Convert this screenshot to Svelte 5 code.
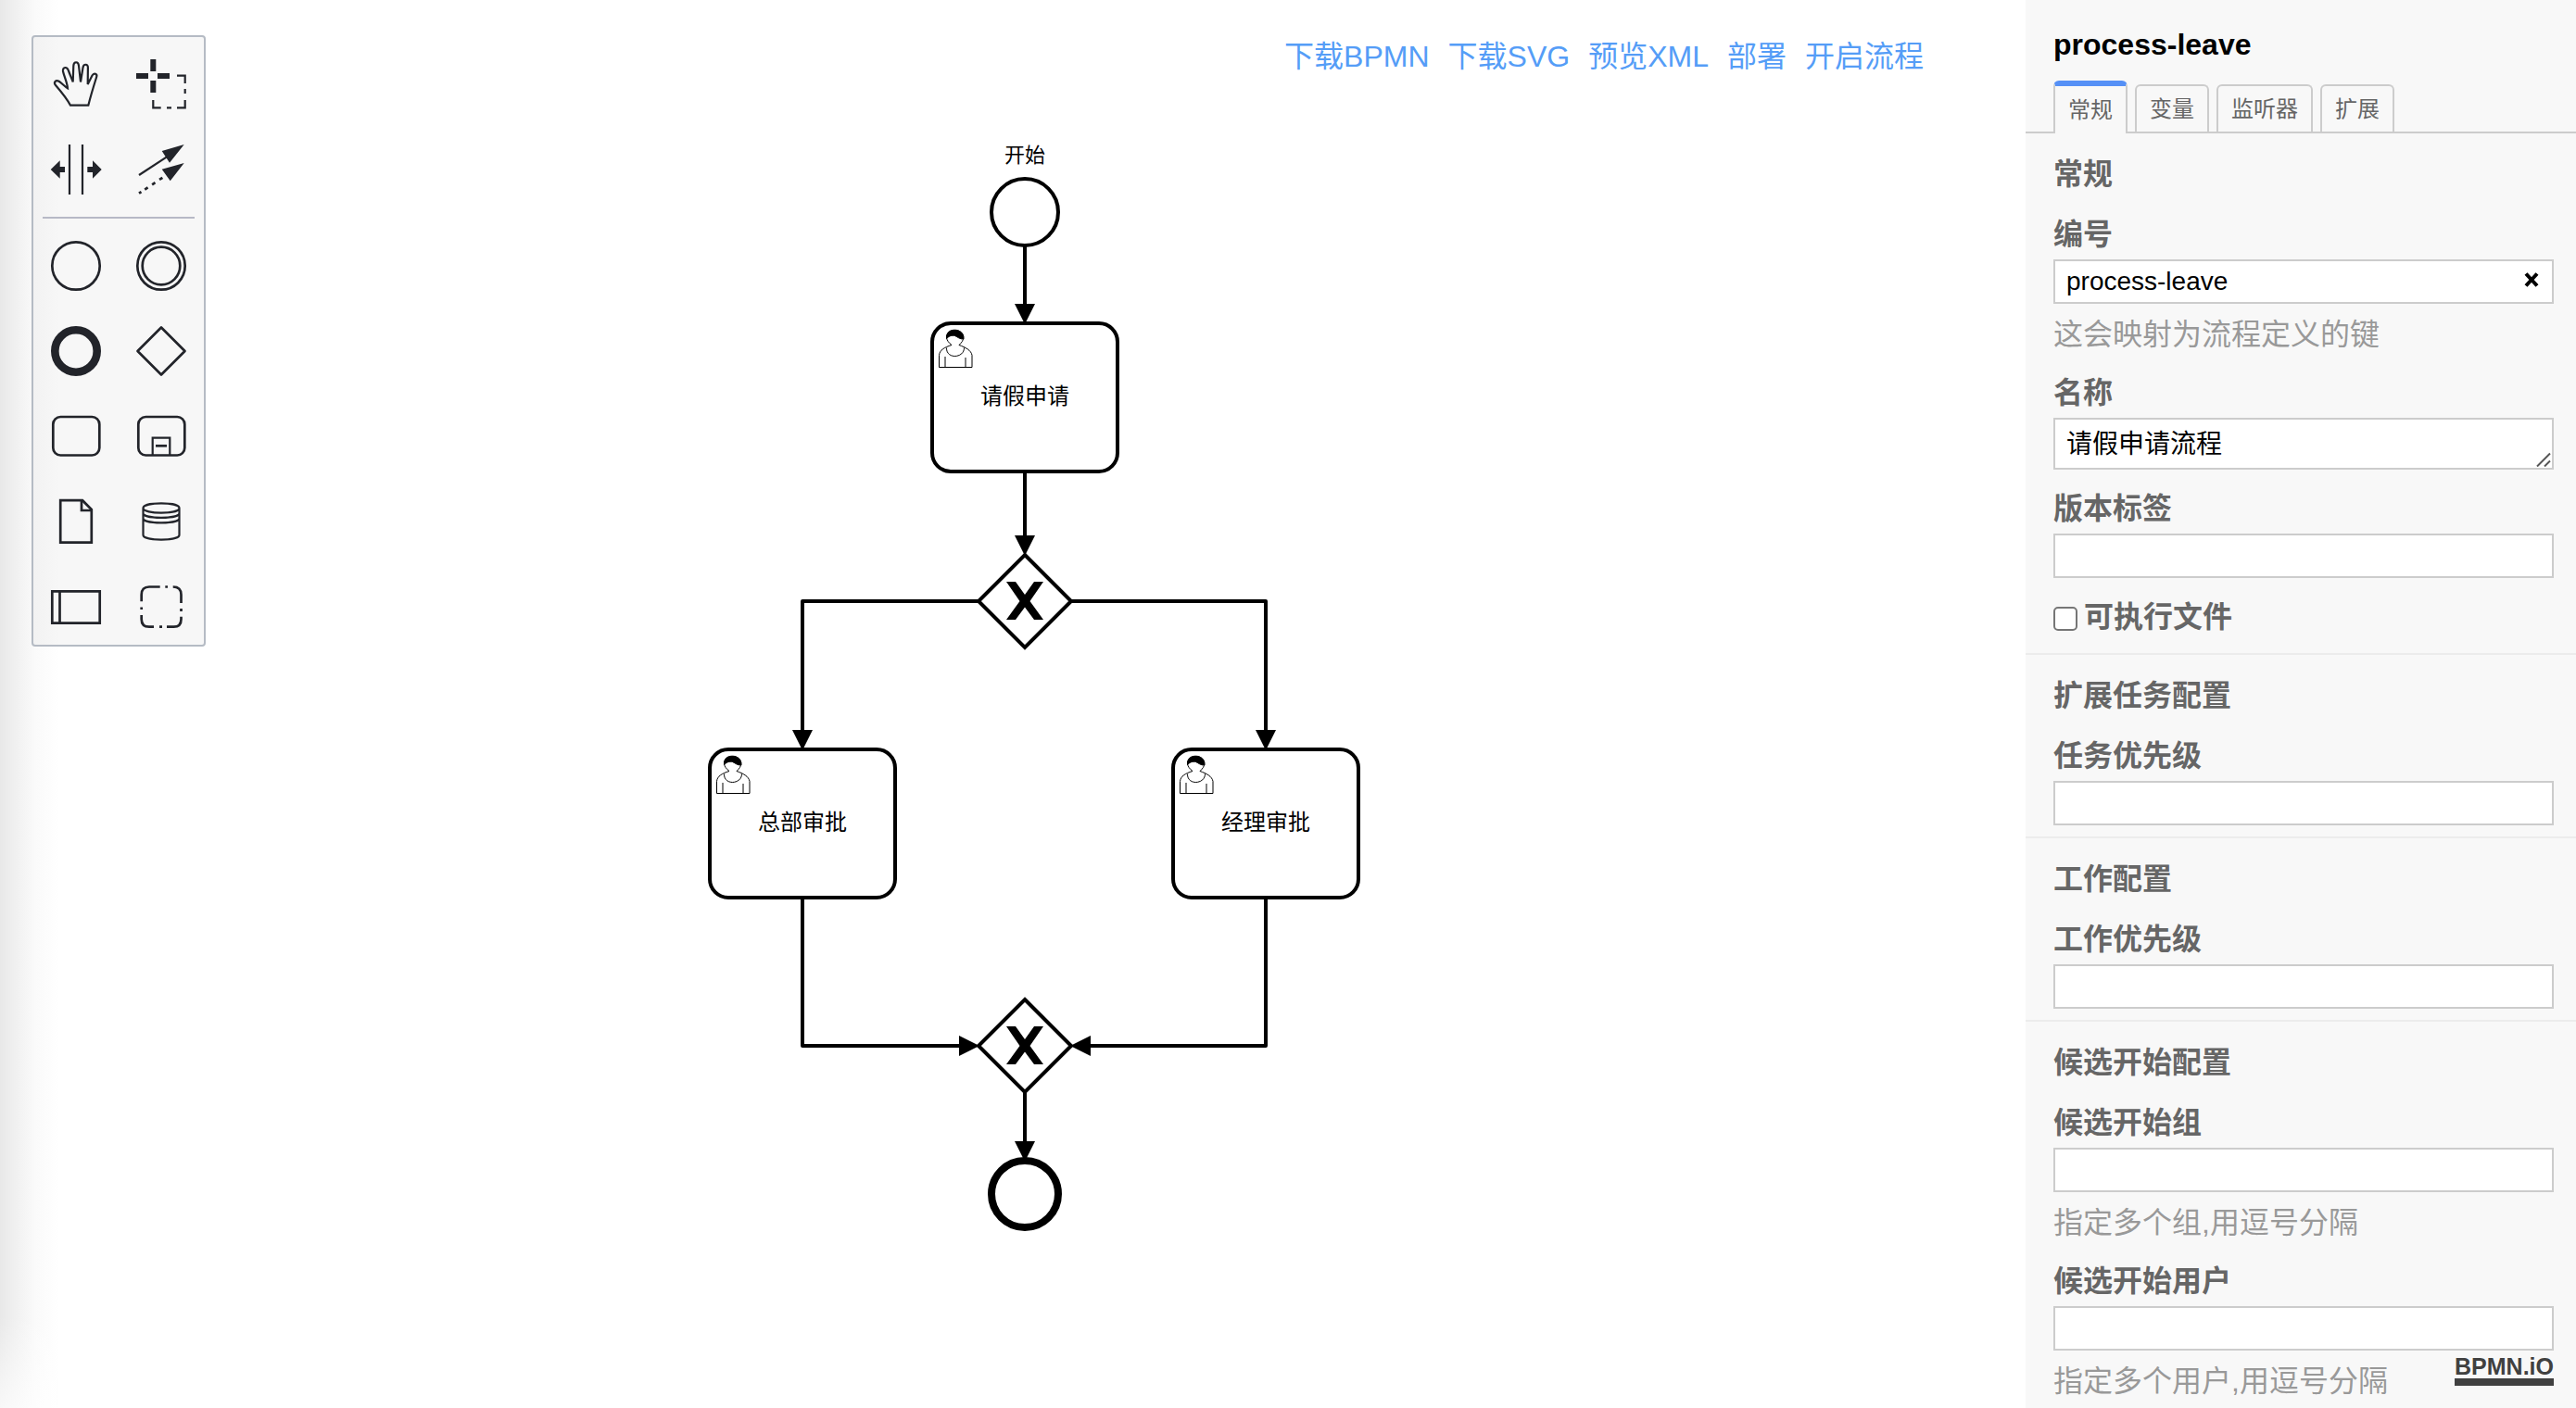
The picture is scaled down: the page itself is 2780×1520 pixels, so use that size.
<script>
  const links = ['下载BPMN', '下载SVG', '预览XML', '部署', '开启流程'];
  const tabs = ['常规', '变量', '监听器', '扩展'];
  let activeTab = $state(0);
  let processId = $state('process-leave');
  let processName = $state('请假申请流程');
  let executable = $state(false);

  const groups = [
    { title: '扩展任务配置', fields: [{ id: 'task-priority', label: '任务优先级' }] },
    { title: '工作配置', fields: [{ id: 'job-priority', label: '工作优先级' }] },
    {
      title: '候选开始配置',
      fields: [
        { id: 'starter-groups', label: '候选开始组', hint: '指定多个组,用逗号分隔' },
        { id: 'starter-users', label: '候选开始用户', hint: '指定多个用户,用逗号分隔' },
      ],
    },
  ];

  const tasks = [
    { x: 1006, y: 349, name: '请假申请' },
    { x: 766, y: 809, name: '总部审批' },
    { x: 1266, y: 809, name: '经理审批' },
  ];
  const gateways = [649, 1129];
  const flows = [
    'M1106 265V340',
    'M1106 509V590',
    'M1056 649H866V800',
    'M1156 649H1366V800',
    'M866 969V1129H1047',
    'M1366 969V1129H1165',
    'M1106 1179V1244',
  ];
  const heads = [
    'M1095 328h22l-11 22z',
    'M1095 578h22l-11 22z',
    'M855 788h22l-11 22z',
    'M1355 788h22l-11 22z',
    'M1035 1118v22l22-11z',
    'M1177 1118v22l-22-11z',
    'M1095 1232h22l-11 22z',
  ];
</script>

<div class="page">
  <main class="canvas">
    <svg class="diagram" aria-label="请假申请流程">
      {#each flows as d}<path class="flow" {d} />{/each}
      {#each heads as d}<path {d} />{/each}
      <circle class="shape" cx="1106" cy="229" r="36" />
      <text class="caption" x="1106" y="175">开始</text>
      {#each tasks as t}
        <g transform="translate({t.x} {t.y})">
          <rect class="shape" width="200" height="160" rx="20" />
          <g class="user">
            <path d="M7.5 47.5V34.5C8 29 13 26 21 23.5C18 21 15.5 18.5 15.5 14.5C16 10 20 7.5 24.5 7.5S33.5 10 33.8 14.5C34 18.5 31.5 21 29 23.5C36 26 42 29 43 34.5V47.5Z" />
            <path d="M15.5 26.5C15 39 34.5 38 34.5 26.5M14 36V47M36 37V47" />
            <path class="hair" d="M15.5 16.5C15 9 20 7.2 24.5 7.2S34 10 34 17C30 17.5 27 14.5 24.5 13.5C21 12.5 18 14 15.5 16.5Z" />
          </g>
          <text class="name" x="100" y="87">{t.name}</text>
        </g>
      {/each}
      {#each gateways as y}
        <g transform="translate(1106 {y})">
          <path class="shape" d="M0-50L50 0L0 50L-50 0Z" />
          <path d="M-20-21h10L0-7L10-21h10L5.5 0L20 20h-10L0 6.5L-10 20h-10L-5.5 0Z" />
        </g>
      {/each}
      <circle class="shape end" cx="1106" cy="1289" r="36" />
    </svg>

    <nav class="links">
      {#each links as l}<a href="#top">{l}</a>{/each}
    </nav>

    <div class="palette">
      <div class="tools">
        <button aria-label="抓手"><svg viewBox="0 0 60 60">
          <path class="s2" d="M24 52.7C20 45 14 38 8 31C5.5 28 8 24.5 12 27C15 29 18 32.5 21 34.3C20.5 28 17 21 16 16C15.3 11 20.5 10.5 22 15.5C24 21 25.5 24 26.7 27.5L27.3 10C27.6 5 32.6 5 33 10L35 27.5L37.5 12C38.2 7.5 43.2 7.8 42.9 12L42.7 30L47.5 20.5C49.5 17 53.3 18.7 52.2 22C50 29 46 42 43.3 52.7Z" /></svg></button>
        <button aria-label="框选"><svg viewBox="0 0 60 60">
          <path class="f" d="M18.3 3h6v13h-6zM18.3 26h6v13h-6zM3 18h13v6h-13zM26 18h13v6h-13z" />
          <path class="s2" d="M47 20.7H55.7V29M55.7 35v5M55.7 47V55.3H47M41 55.3h-5M29.7 55.3H21.3V47" /></svg></button>
        <button aria-label="空间"><svg viewBox="0 0 60 60">
          <path class="s2" d="M23 3V57M37 3V57" />
          <path class="f" d="M2.7 30L12.7 20.3V27H18V33H12.7V39.7ZM57.7 30L48 20.3V27H42.3V33H48V39.7Z" /></svg></button>
        <button aria-label="连线"><svg viewBox="0 0 60 60">
          <path class="s2" d="M6 36L36 16.3" />
          <path class="s3" stroke-dasharray="3 0 0 4.5 4 5.5 4 5.5 4 20" d="M6 55.7L34 37" />
          <path class="f" d="M54.7 3L30.7 10L39 22.7ZM54.7 23L30.7 29.7L39.7 42.3Z" /></svg></button>
      </div>
      <hr />
      <div class="tools">
        <button aria-label="开始事件"><svg viewBox="0 0 60 60"><circle class="s3" cx="30" cy="30" r="25.7" /></svg></button>
        <button aria-label="中间事件"><svg viewBox="0 0 60 60"><circle class="s3" cx="30" cy="30" r="25.7" /><circle class="s3" cx="30" cy="30" r="20.3" /></svg></button>
        <button aria-label="结束事件"><svg viewBox="0 0 60 60"><circle class="thick" cx="30" cy="30" r="22.7" /></svg></button>
        <button aria-label="网关"><svg viewBox="0 0 60 60"><path class="s3" d="M30 4.5L55.5 30L30 55.5L4.5 30Z" /></svg></button>
        <button aria-label="任务"><svg viewBox="0 0 60 60"><rect class="s3" x="5.3" y="9" width="50" height="41.5" rx="8" /></svg></button>
        <button aria-label="子流程"><svg viewBox="0 0 60 60"><rect class="s3" x="5.3" y="9" width="50" height="41.5" rx="8" /><path class="s2" d="M20.7 50V31.7H39.3V50" /><path class="s3" d="M24 40.3H36" /></svg></button>
        <button aria-label="数据对象"><svg viewBox="0 0 60 60"><path class="s3 sharp" d="M13.2 7.2H37L46.8 17V52.7H13.2Z" /><path class="s3 sharp" d="M36 7.2V18H46.8" /></svg></button>
        <button aria-label="数据存储"><svg viewBox="0 0 60 60"><path class="s2" d="M10.5 15.5C10.5 8.7 49.5 8.7 49.5 15.5S10.5 22.3 10.5 15.5V44.5C10.5 51.2 49.5 51.2 49.5 44.5V15.5M10.5 21C10.5 27.5 49.5 27.5 49.5 21M10.5 26.5C10.5 33 49.5 33 49.5 26.5" /></svg></button>
        <button aria-label="泳池"><svg viewBox="0 0 60 60"><path class="s3 sharp" d="M4.3 13.3H55.7V47.7H4.3ZM12.5 13V48" /></svg></button>
        <button aria-label="分组"><svg viewBox="0 0 60 60"><path class="s3" d="M8.7 24.3V17Q8.7 8.5 17 8.5H28.7M34.3 8.5H37M42.7 8.5Q51.5 8.5 51.5 17V26M51.5 32V35M51.5 40.7V43.5Q51.5 51.7 43.5 51.7H36M31 51.7H28M22 51.7H17Q8.7 51.7 8.7 43.5V39M8.7 33V30.5" /></svg></button>
      </div>
    </div>
  </main>

  <aside class="panel">
    <h1>{processId}</h1>
    <div class="tabs" role="tablist">
      {#each tabs as t, i}
        <button role="tab" aria-selected={i === activeTab} class:active={i === activeTab} onclick={() => (activeTab = i)}>{t}</button>
      {/each}
    </div>

    <section>
      <h2>常规</h2>
      <div class="field">
        <label for="pid">编号</label>
        <div class="box">
          <input id="pid" type="text" bind:value={processId} />
          <button class="clear" aria-label="清除" onclick={() => (processId = '')}><svg viewBox="0 0 16 16"><path d="M2 1.5L14 14.5M14 1.5L2 14.5" /></svg></button>
        </div>
        <p>这会映射为流程定义的键</p>
      </div>
      <div class="field">
        <label for="pname">名称</label>
        <div class="box">
          <textarea id="pname" rows="1" bind:value={processName}></textarea>
          <svg class="grip" viewBox="0 0 16 16"><path d="M1 15.5L15 1.5M9 15.5L15 9.5" /></svg>
        </div>
      </div>
      <div class="field">
        <label for="vtag">版本标签</label>
        <input id="vtag" type="text" />
      </div>
      <div class="field check">
        <input id="exec" type="checkbox" bind:checked={executable} />
        <label for="exec">可执行文件</label>
      </div>
    </section>

    {#each groups as g}
      <section>
        <h2>{g.title}</h2>
        {#each g.fields as f}
          <div class="field">
            <label for={f.id}>{f.label}</label>
            <input id={f.id} type="text" />
            {#if f.hint}<p>{f.hint}</p>{/if}
          </div>
        {/each}
      </section>
    {/each}
  </aside>

  <a class="logo" href="#bpmn">BPMN.iO</a>
</div>

<style>
  :global(body) {
    margin: 0;
  }
  .page {
    position: relative;
    display: grid;
    grid-template-columns: minmax(0, 1fr) 594px;
    height: 100vh;
    overflow: hidden;
    background: #fff;
    font-family: 'Liberation Sans', 'Noto Sans CJK SC', sans-serif;
  }
  button,
  input,
  textarea {
    font: inherit;
    margin: 0;
    box-sizing: border-box;
  }
  .canvas {
    position: relative;
    background:
      linear-gradient(to bottom, transparent calc(100% - 100px), rgba(255, 255, 255, 0.7)),
      linear-gradient(to right, #e8e8e8, #f0f0f0 16px, #fafafa 38px, #fff 64px);
  }
  .diagram {
    position: absolute;
    inset: 0;
    width: 100%;
    height: 100%;
  }
  .shape {
    fill: #fff;
    stroke: #000;
    stroke-width: 4;
  }
  .end {
    stroke-width: 8;
  }
  .flow {
    fill: none;
    stroke: #000;
    stroke-width: 4;
    stroke-linejoin: round;
  }
  .user {
    fill: none;
    stroke: #000;
    stroke-width: 1;
  }
  .hair {
    fill: #000;
  }
  text {
    text-anchor: middle;
  }
  .caption {
    font-size: 22px;
  }
  .name {
    font-size: 24px;
  }
  .links {
    position: relative;
    display: flex;
    justify-content: flex-end;
    gap: 20px;
    padding: 42px 110px 0 0;
    font-size: 32px;
    line-height: 38px;
  }
  .links a {
    color: #559df7;
    text-decoration: none;
  }
  .palette {
    position: absolute;
    left: 34px;
    top: 38px;
    width: 184px;
    border: 2px solid #b5bbc4;
    border-radius: 4px;
    background: linear-gradient(to right, #f2f2f2, #f7f7f7 28px);
  }
  .tools {
    display: grid;
    grid-template-columns: 1fr 1fr;
  }
  .tools button {
    display: flex;
    align-items: center;
    justify-content: center;
    height: 92px;
    padding: 10px 0 0;
    border: 0;
    background: none;
  }
  .tools svg {
    width: 60px;
    height: 60px;
    fill: none;
    stroke: none;
  }
  hr {
    height: 2px;
    margin: 10px 10px 0;
    border: 0;
    background: #b7b9c6;
  }
  .s2 {
    stroke: #22242a;
    stroke-width: 2.2;
  }
  .s3 {
    stroke: #22242a;
    stroke-width: 2.7;
    stroke-linejoin: round;
  }
  .sharp {
    stroke-linejoin: miter;
  }
  .thick {
    stroke: #22242a;
    stroke-width: 8.6;
  }
  .f {
    fill: #22242a;
  }
  .panel {
    background: #f8f8f8;
    overflow: hidden;
    color: #666;
  }
  h1 {
    margin: 0;
    padding: 29px 30px 20px;
    font-size: 32px;
    line-height: 38px;
    color: #000;
  }
  .tabs {
    display: flex;
    align-items: flex-end;
    gap: 8px;
    padding: 0 30px;
    border-bottom: 2px solid #ccc;
  }
  .tabs button {
    height: 51px;
    padding: 0 14px;
    border: 2px solid #ccc;
    border-bottom: 0;
    border-radius: 6px 6px 0 0;
    background: #f8f8f8;
    color: #666;
    font-size: 24px;
    line-height: 48px;
  }
  .tabs .active {
    height: 57px;
    margin-bottom: -2px;
    border-top: 6px solid #5590f6;
  }
  section {
    padding: 24px 24px 12px 30px;
  }
  section + section {
    border-top: 2px solid #ececec;
  }
  h2 {
    margin: 0 0 25px;
    font-size: 32px;
    line-height: 40px;
  }
  label {
    display: block;
    font-size: 32px;
    line-height: 40px;
    font-weight: bold;
  }
  .field + .field {
    margin-top: 22px;
  }
  .box {
    position: relative;
  }
  input[type='text'],
  textarea {
    display: block;
    width: 100%;
    height: 48px;
    margin-top: 7px;
    padding: 0 12px;
    border: 2px solid #ccc;
    border-radius: 0;
    background: #fff;
    color: #000;
    font-size: 28px;
  }
  textarea {
    height: 56px;
    padding: 8px 12px;
    line-height: 38px;
    resize: none;
    overflow: hidden;
  }
  .clear {
    position: absolute;
    right: 16px;
    top: 14px;
    width: 16px;
    height: 16px;
    padding: 0;
    border: 0;
    background: none;
  }
  .clear svg {
    display: block;
    fill: none;
    stroke: #000;
    stroke-width: 4;
  }
  .grip {
    position: absolute;
    right: 3px;
    bottom: 3px;
    width: 16px;
    height: 16px;
    fill: none;
    stroke: #555;
    stroke-width: 2;
  }
  p {
    margin: 12px 0 0;
    font-size: 32px;
    line-height: 42px;
    color: #999;
  }
  .check {
    display: flex;
    align-items: center;
    gap: 7px;
    padding-bottom: 7px;
  }
  .check input {
    appearance: none;
    width: 26px;
    height: 26px;
    margin-top: 4px;
    border: 2px solid #767676;
    border-radius: 5px;
    background: #fff;
  }
  .logo {
    position: absolute;
    right: 24px;
    bottom: 24px;
    border-bottom: 8px solid #404040;
    color: #404040;
    font-size: 25px;
    font-weight: bold;
    line-height: 25px;
    text-decoration: none;
  }
</style>
